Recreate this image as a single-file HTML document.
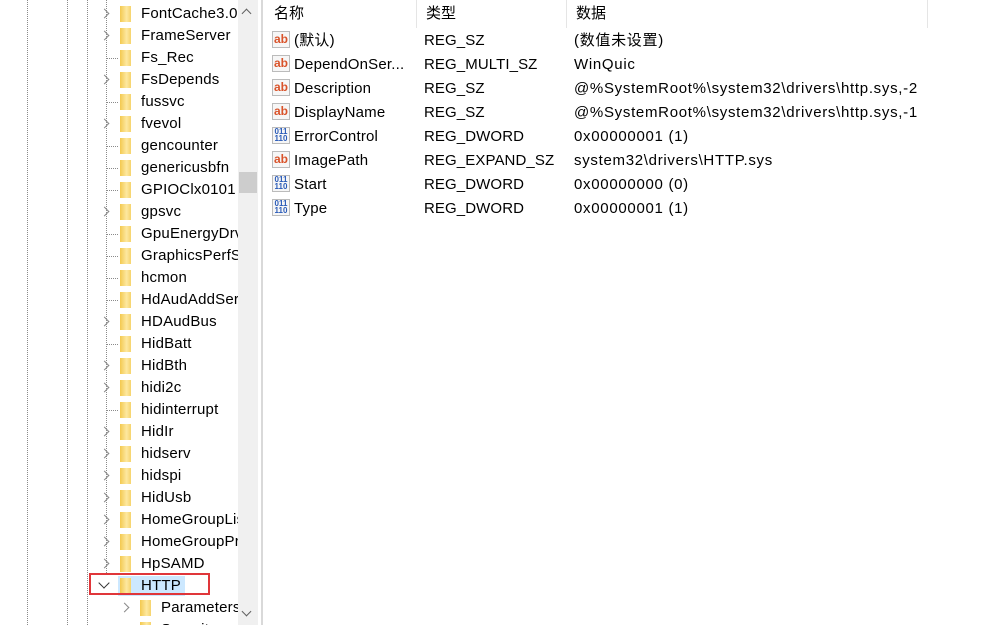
<!DOCTYPE html>
<html><head><meta charset="utf-8"><style>
*{margin:0;padding:0;box-sizing:border-box}
html,body{width:991px;height:625px;overflow:hidden}
body{background:#fff;font-family:"Liberation Sans","Noto Sans CJK SC",sans-serif;font-size:15px;color:#000;position:relative}
.abs{position:absolute}
.vl{position:absolute;top:0;height:625px;border-left:1px dotted #8a8a8a}
.row{position:absolute;left:0;height:22px;width:238px;line-height:22px;white-space:nowrap;overflow:hidden}
.txt{position:absolute;left:141px;top:0;letter-spacing:0.2px}
.fold{position:absolute;left:120px;top:3px;width:11px;height:16px;background:linear-gradient(90deg,#f3c94f,#fde8a0 60%,#f6d36c)}
.exp{position:absolute;left:101px;top:7px;width:7px;height:7px;border-right:1.5px solid #8a8a8a;border-top:1.5px solid #8a8a8a;transform:rotate(45deg)}
.stub{position:absolute;left:107px;top:11px;width:11px;border-top:1px dotted #8a8a8a}
.hdr{position:absolute;top:0;height:28px;line-height:28px;padding-left:9px;border-right:1px solid #e5e5e5}
.r{position:absolute;height:24px;line-height:24px;white-space:nowrap}
.ic{position:absolute;left:272px;width:18px;height:17px;border:1px solid #bbb;background:#f6f6f6;font-size:12px;font-weight:bold;line-height:14px;text-align:center}
.ab{color:#d9532a}
.bin{color:#2a5bb8;font-size:8px;line-height:7px;letter-spacing:0}
</style></head><body>
<div class="vl" style="left:27px"></div>
<div class="vl" style="left:67px"></div>
<div class="vl" style="left:87px"></div>
<div class="vl" style="left:106px;height:575px"></div>

<div id="tree"></div>
<script>
var items=[["FontCache3.0",1],["FrameServer",1],["Fs_Rec",0],["FsDepends",1],["fussvc",0],["fvevol",1],["gencounter",0],["genericusbfn",0],["GPIOClx0101",0],["gpsvc",1],["GpuEnergyDrv",0],["GraphicsPerfSvc",0],["hcmon",0],["HdAudAddService",0],["HDAudBus",1],["HidBatt",0],["HidBth",1],["hidi2c",1],["hidinterrupt",0],["HidIr",1],["hidserv",1],["hidspi",1],["HidUsb",1],["HomeGroupListener",1],["HomeGroupProvider",1],["HpSAMD",1]];
var h="";
items.forEach(function(it,i){var y=3+22*i;
h+='<div class="row" style="top:'+y+'px">'+(it[1]?'<div class="exp"></div>':'<div class="stub"></div>')+'<div class="fold"></div><div class="txt">'+it[0]+'</div></div>';});
document.getElementById('tree').innerHTML=h;
</script>
<div class="row" style="top:575px">
<div class="abs" style="left:100px;top:4px;width:8px;height:8px;border-right:1.5px solid #333;border-bottom:1.5px solid #333;transform:rotate(45deg)"></div>
<div class="abs" style="left:118px;top:1px;width:67px;height:20px;background:#cce8ff"></div>
<div class="fold"></div><div class="txt">HTTP</div></div>
<div class="abs" style="left:89px;top:573px;width:121px;height:22px;border:2px solid #e0363a"></div>
<div class="row" style="top:597px"><div class="exp" style="left:121px"></div><div class="fold" style="left:140px"></div><div class="txt" style="left:161px">Parameters</div></div>
<div class="row" style="top:619px"><div class="fold" style="left:140px"></div><div class="txt" style="left:161px">Security</div></div>

<!-- scrollbar -->
<div class="abs" style="left:238px;top:0;width:20px;height:625px;background:#f0f0f0"></div>
<div class="abs" style="left:239px;top:172px;width:18px;height:21px;background:#cdcdcd"></div>
<div class="abs" style="left:243px;top:10px;width:7px;height:7px;border-left:1.5px solid #606060;border-top:1.5px solid #606060;transform:rotate(45deg)"></div>
<div class="abs" style="left:243px;top:608px;width:7px;height:7px;border-right:1.5px solid #606060;border-bottom:1.5px solid #606060;transform:rotate(45deg)"></div>
<div class="abs" style="left:261px;top:0;width:2px;height:625px;background:#d9d9d9"></div>

<!-- list -->
<div class="hdr" style="left:265px;width:152px">名称</div>
<div class="hdr" style="left:417px;width:150px">类型</div>
<div class="hdr" style="left:567px;width:361px">数据</div>

<div id="list"></div>
<script>
var rows=[["ab","(默认)","REG_SZ","(数值未设置)"],["ab","DependOnSer...","REG_MULTI_SZ","WinQuic"],["ab","Description","REG_SZ","@%SystemRoot%\\system32\\drivers\\http.sys,-2"],["ab","DisplayName","REG_SZ","@%SystemRoot%\\system32\\drivers\\http.sys,-1"],["b","ErrorControl","REG_DWORD","0x00000001 (1)"],["ab","ImagePath","REG_EXPAND_SZ","system32\\drivers\\HTTP.sys"],["b","Start","REG_DWORD","0x00000000 (0)"],["b","Type","REG_DWORD","0x00000001 (1)"]];
var s="";
rows.forEach(function(r,i){var y=29+24*i;
s+='<div class="ic '+(r[0]=="ab"?'ab':'bin')+'" style="top:'+(y+2)+'px">'+(r[0]=="ab"?'ab':'011<br>110')+'</div>';
s+='<div class="r" style="top:'+y+'px;left:294px;letter-spacing:0.2px">'+r[1]+'</div>';
s+='<div class="r" style="top:'+y+'px;left:424px;letter-spacing:0.1px">'+r[2]+'</div>';
s+='<div class="r" style="top:'+y+'px;left:574px;letter-spacing:0.7px">'+r[3]+'</div>';});
document.getElementById('list').innerHTML=s;
</script>
</body></html>
